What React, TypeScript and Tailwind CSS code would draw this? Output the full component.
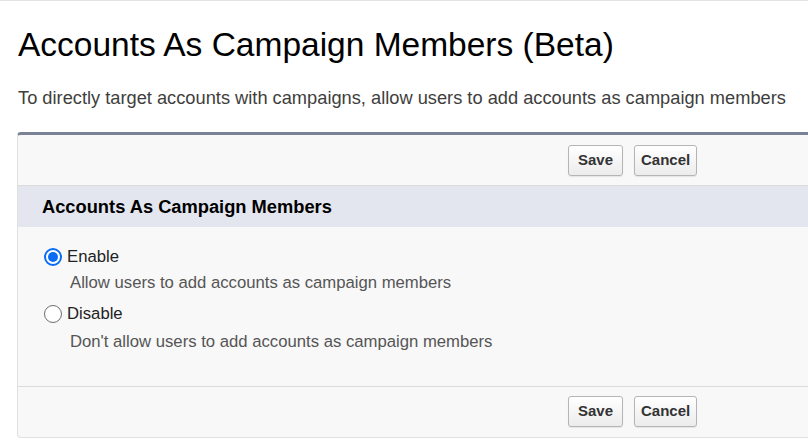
import React from 'react';

function Btn({ label }: { label: string }) {
    return (
        <button className="h-[31px] min-w-[55px] px-[6px] rounded-[3px] border border-[#b5b5b5] bg-gradient-to-b from-white to-[#ececec] text-[15px] font-bold text-[#333] shadow-[0_1px_1px_rgba(0,0,0,0.08)]">
            {label}
        </button>
    );
}

function ButtonRow() {
    return (
        <div className="flex gap-[11px] pl-[550px]">
            <Btn label="Save" />
            <Btn label="Cancel" />
        </div>
    );
}

function Radio({ checked }: { checked?: boolean }) {
    return (
        <span
            className={
                checked
                    ? 'flex h-[18px] w-[18px] items-center justify-center rounded-full border-[2px] border-[#0a6cf5] bg-white'
                    : 'flex h-[18px] w-[18px] items-center justify-center rounded-full border border-[#6e6e6e] bg-white'
            }
        >
            {checked && <span className="h-[10px] w-[10px] rounded-full bg-[#0a6cf5]" />}
        </span>
    );
}

export default function App() {
    const options = [
        { label: 'Enable', desc: 'Allow users to add accounts as campaign members', checked: true, mt: 'mt-[6px]' },
        { label: 'Disable', desc: "Don't allow users to add accounts as campaign members", checked: false, mt: 'mt-[8px]' },
    ];

    return (
        <div className="w-[808px] h-[440px] overflow-hidden bg-white border-t border-[#e3e3e3] font-['Liberation_Sans',Arial,sans-serif]">
            <h1 className="pl-[18px] pt-[24px] text-[33.5px] leading-[40px] text-black">Accounts As Campaign Members (Beta)</h1>
            <p className="pl-[18px] mt-[22px] text-[18.25px] leading-[22px] text-[#3e3e3c]">
                To directly target accounts with campaigns, allow users to add accounts as campaign members
            </p>
            <div className="ml-[17px] mt-[23px] w-[820px] rounded-[4px] border-t-[3px] border-t-[#7c8296] border-l border-b border-[#e0e0e0] bg-[#f8f8f8]">
                <div className="h-[51px] pt-[10px] border-b border-[#dcdcdc]">
                    <ButtonRow />
                </div>
                <div className="h-[41px] flex items-center pl-[24px] bg-[#e3e6ef]">
                    <h2 className="text-[18.3px] font-bold text-black">Accounts As Campaign Members</h2>
                </div>
                <div className="pl-[26px] pt-[20px] h-[160px] border-b border-[#dcdcdc]">
                    {options.map((o) => (
                        <div key={o.label} className="mb-[11px]">
                            <label className="flex items-center gap-[5px]">
                                <Radio checked={o.checked} />
                                <span className="text-[16.7px] leading-[20px] text-[#222]">{o.label}</span>
                            </label>
                            <div className={`pl-[26px] text-[16.7px] leading-[20px] text-[#555] ${o.mt}`}>{o.desc}</div>
                        </div>
                    ))}
                </div>
                <div className="h-[50px] pt-[9px]">
                    <ButtonRow />
                </div>
            </div>
        </div>
    );
}
